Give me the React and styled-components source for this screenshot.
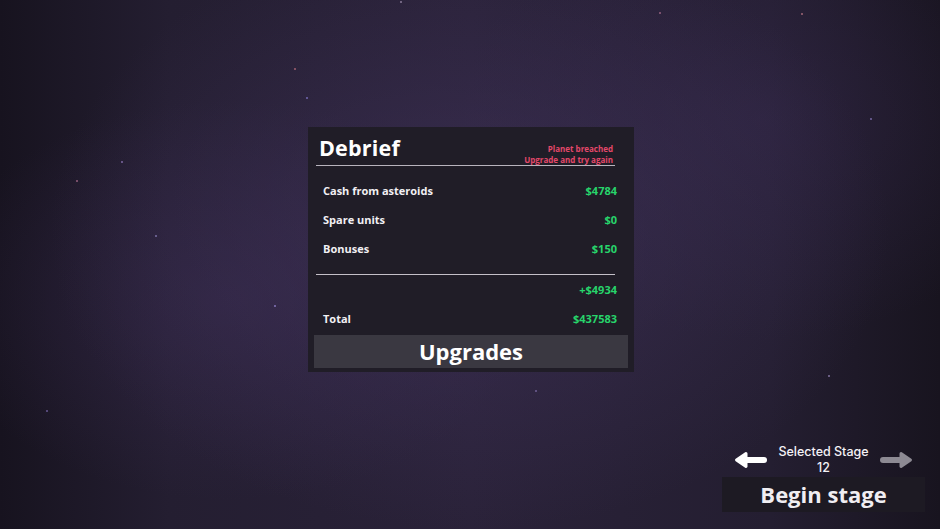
import React from 'react';
import styled, { createGlobalStyle } from 'styled-components';

const GlobalStyle = createGlobalStyle`
  html, body {
    margin: 0;
    padding: 0;
    background: #1a1624;
  }
  body {
    font-family: "Open Sans", "Noto Sans", sans-serif;
    color: #f2f0f4;
  }
`;

const Screen = styled.div`
  position: relative;
  width: 940px;
  height: 529px;
  overflow: hidden;
  display: flex;
  flex-direction: column;
  align-items: center;
  background:
    radial-gradient(ellipse 420px 300px at 470px 230px, rgba(70, 55, 100, 0.5), rgba(70, 55, 100, 0) 100%),
    radial-gradient(ellipse 300px 200px at 230px 300px, rgba(60, 45, 85, 0.45), rgba(60, 45, 85, 0) 100%),
    radial-gradient(ellipse 300px 220px at 760px 120px, rgba(58, 44, 84, 0.4), rgba(58, 44, 84, 0) 100%),
    linear-gradient(90deg, #17131f 0%, #241e31 18%, #2a2239 50%, #241e31 82%, #18141f 100%);
`;

const Star = styled.span`
  position: absolute;
  width: ${(p) => p.size || 2}px;
  height: ${(p) => p.size || 2}px;
  border-radius: 50%;
  background: ${(p) => p.color || '#b07a9a'};
  opacity: 0.8;
`;

const Panel = styled.section`
  margin-top: 127px;
  margin-left: 2px;
  width: 326px;
  height: 245px;
  box-sizing: border-box;
  background: #201d27;
  padding: 0 6px 4px 6px;
  display: flex;
  flex-direction: column;
`;

const Header = styled.header`
  display: flex;
  justify-content: space-between;
  align-items: flex-end;
  margin: 0 13px 0 2px;
  padding: 4px 0 0 3px;
  border-bottom: 1px solid #b8b4bd;
  height: 34px;
`;

const Title = styled.h1`
  margin: 0 0 3px 0;
  font-size: 21.5px;
  font-weight: 700;
  line-height: 28px;
  color: #ffffff;
  letter-spacing: 0.2px;
`;

const Warning = styled.div`
  text-align: right;
  font-size: 8px;
  font-weight: 700;
  line-height: 11px;
  color: #e4486a;
  padding: 0 2px 0 0;
`;

const Rows = styled.div`
  display: flex;
  flex-direction: column;
  padding: 10px 11px 0 9px;
`;

const Row = styled.div`
  display: flex;
  justify-content: space-between;
  align-items: center;
  height: 29px;
  font-size: 11px;
  font-weight: 700;
`;

const Label = styled.span`
  color: #f2f0f4;
`;

const Value = styled.span`
  color: #27d46b;
`;

const Divider = styled.hr`
  margin: 11px 13px 0 2px;
  border: 0;
  border-top: 1px solid #c4c0c8;
  height: 0;
`;

const Summary = styled.div`
  display: flex;
  flex-direction: column;
  padding: 0 11px 0 9px;
`;

const Button = styled.button`
  border: 0;
  margin: 0;
  font-family: inherit;
  font-weight: 700;
  color: #ffffff;
  cursor: pointer;
`;

const UpgradeButton = styled(Button)`
  margin-top: auto;
  height: 33px;
  background: #3a3841;
  font-size: 22px;
  line-height: 33px;
  padding: 0;
`;

const StageBox = styled.div`
  margin-top: auto;
  margin-bottom: 17px;
  align-self: flex-end;
  margin-right: 15px;
  width: 203px;
  display: flex;
  flex-direction: column;
  align-items: center;
`;

const Selector = styled.div`
  display: flex;
  align-items: center;
  justify-content: space-between;
  width: 180px;
  margin-bottom: 1px;
`;

const StageLabel = styled.div`
  font-family: Inter, "Noto Sans", sans-serif;
  font-size: 12.5px;
  font-weight: 500;
  line-height: 16px;
  text-align: center;
  color: #f4f2f6;
`;

const Arrow = styled.svg`
  width: 33px;
  height: 18px;
  color: ${(p) => (p.disabled ? '#8d8a93' : '#ffffff')};
`;

const BeginButton = styled(Button)`
  width: 203px;
  height: 35px;
  background: #1d1a23;
  font-size: 22px;
  line-height: 35px;
  padding: 0;
  color: #f0eef2;
`;

function ArrowIcon({ dir, disabled }) {
  const flip = dir === 'right' ? 'translate(33 0) scale(-1 1)' : undefined;
  return (
    <Arrow viewBox="0 0 33 18" disabled={disabled}>
      <g transform={flip} fill="currentColor" stroke="currentColor" strokeLinejoin="round" strokeLinecap="round">
        <path d="M12 2.5 L2.5 9 L12 15.5 Z" strokeWidth="3" />
        <path d="M10 9 H30" strokeWidth="6" fill="none" />
      </g>
    </Arrow>
  );
}

const stars = [
  { x: 294, y: 68, c: '#c0707e' },
  { x: 76, y: 180, c: '#b07090' },
  { x: 155, y: 235, c: '#8f84c0' },
  { x: 121, y: 161, c: '#8870b0', s: 1.5 },
  { x: 306, y: 97, c: '#7c70c0', s: 1.5 },
  { x: 400, y: 1, c: '#a090b0' },
  { x: 659, y: 12, c: '#b07090' },
  { x: 801, y: 13, c: '#c07888' },
  { x: 870, y: 118, c: '#8070b0', s: 1.5 },
  { x: 274, y: 305, c: '#9080c8', s: 1.5 },
  { x: 535, y: 390, c: '#7868a0', s: 1.5 },
  { x: 828, y: 375, c: '#9080b0', s: 1.5 },
  { x: 46, y: 410, c: '#7060a0', s: 1.5 },
];

const rows = [
  ['Cash from asteroids', '$4784'],
  ['Spare units', '$0'],
  ['Bonuses', '$150'],
];

export default function App() {
  return (
    <>
      <GlobalStyle />
      <Screen>
        {stars.map((st, i) => (
          <Star
            key={i}
            color={st.c}
            size={st.s}
            style={{ left: st.x, top: st.y }}
          />
        ))}
        <Panel>
          <Header>
            <Title>Debrief</Title>
            <Warning>
              Planet breached
              <br />
              Upgrade and try again
            </Warning>
          </Header>
          <Rows>
            {rows.map(([label, value]) => (
              <Row key={label}>
                <Label>{label}</Label>
                <Value>{value}</Value>
              </Row>
            ))}
          </Rows>
          <Divider />
          <Summary>
            <Row>
              <Label />
              <Value>+$4934</Value>
            </Row>
            <Row>
              <Label>Total</Label>
              <Value>$437583</Value>
            </Row>
          </Summary>
          <UpgradeButton>Upgrades</UpgradeButton>
        </Panel>
        <StageBox>
          <Selector>
            <ArrowIcon dir="left" />
            <StageLabel>
              Selected Stage
              <br />
              12
            </StageLabel>
            <ArrowIcon dir="right" disabled />
          </Selector>
          <BeginButton>Begin stage</BeginButton>
        </StageBox>
      </Screen>
    </>
  );
}
